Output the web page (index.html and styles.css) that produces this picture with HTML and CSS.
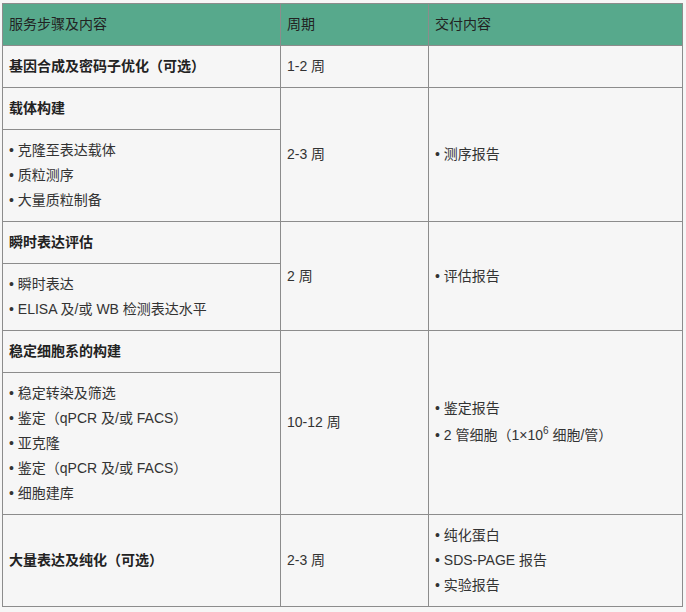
FILE: index.html
```html
<!DOCTYPE html>
<html lang="zh-CN">
<head>
<meta charset="utf-8">
<title>服务步骤</title>
<link rel="stylesheet" href="styles.css">
</head>
<body>
<table class="svc">
  <colgroup>
    <col class="c1">
    <col class="c2">
    <col class="c3">
  </colgroup>
  <thead>
    <tr>
      <th>服务步骤及内容</th>
      <th>周期</th>
      <th>交付内容</th>
    </tr>
  </thead>
  <tbody>
    <tr>
      <td class="title">基因合成及密码子优化（可选）</td>
      <td>1-2 周</td>
      <td></td>
    </tr>
    <tr>
      <td class="title">载体构建</td>
      <td rowspan="2">2-3 周</td>
      <td rowspan="2"><div class="li">• 测序报告</div></td>
    </tr>
    <tr>
      <td>
        <div class="li">• 克隆至表达载体</div>
        <div class="li">• 质粒测序</div>
        <div class="li">• 大量质粒制备</div>
      </td>
    </tr>
    <tr>
      <td class="title">瞬时表达评估</td>
      <td rowspan="2">2 周</td>
      <td rowspan="2"><div class="li">• 评估报告</div></td>
    </tr>
    <tr>
      <td>
        <div class="li">• 瞬时表达</div>
        <div class="li">• ELISA 及/或 WB 检测表达水平</div>
      </td>
    </tr>
    <tr>
      <td class="title">稳定细胞系的构建</td>
      <td rowspan="2">10-12 周</td>
      <td rowspan="2">
        <div class="li">• 鉴定报告</div>
        <div class="li li-sup">• 2 管细胞（1×10<sup>6</sup> 细胞/管）</div>
      </td>
    </tr>
    <tr>
      <td>
        <div class="li">• 稳定转染及筛选</div>
        <div class="li">• 鉴定（qPCR 及/或 FACS）</div>
        <div class="li">• 亚克隆</div>
        <div class="li">• 鉴定（qPCR 及/或 FACS）</div>
        <div class="li">• 细胞建库</div>
      </td>
    </tr>
    <tr>
      <td class="title">大量表达及纯化（可选）</td>
      <td>2-3 周</td>
      <td>
        <div class="li">• 纯化蛋白</div>
        <div class="li">• SDS-PAGE 报告</div>
        <div class="li">• 实验报告</div>
      </td>
    </tr>
  </tbody>
</table>
</body>
</html>
```

FILE: styles.css
```css
html, body {
  margin: 0;
  padding: 0;
  background: #f6f6f6;
}

body {
  padding: 3px 0 0 2px;
  font-family: "Liberation Sans", "Noto Sans CJK SC", sans-serif;
  font-size: 14px;
  color: #333;
}

.svc {
  border-collapse: collapse;
  table-layout: fixed;
  width: 680px;
  background: #f6f6f6;
}

.c1 { width: 278px; }
.c2 { width: 148px; }
.c3 { width: 254px; }

.svc th,
.svc td {
  border: 1px solid #8c8c8c;
  padding: 8px 6px;
  line-height: 25px;
  text-align: left;
  vertical-align: middle;
}

.svc th {
  background: #57a98c;
  font-weight: normal;
  color: #222;
}

.svc td.title {
  font-weight: bold;
  color: #222;
}

.li {
  line-height: 25px;
}

.li-sup {
  line-height: 28px;
}

.li sup {
  font-size: 10px;
  line-height: 0;
  vertical-align: 6px;
}
```
